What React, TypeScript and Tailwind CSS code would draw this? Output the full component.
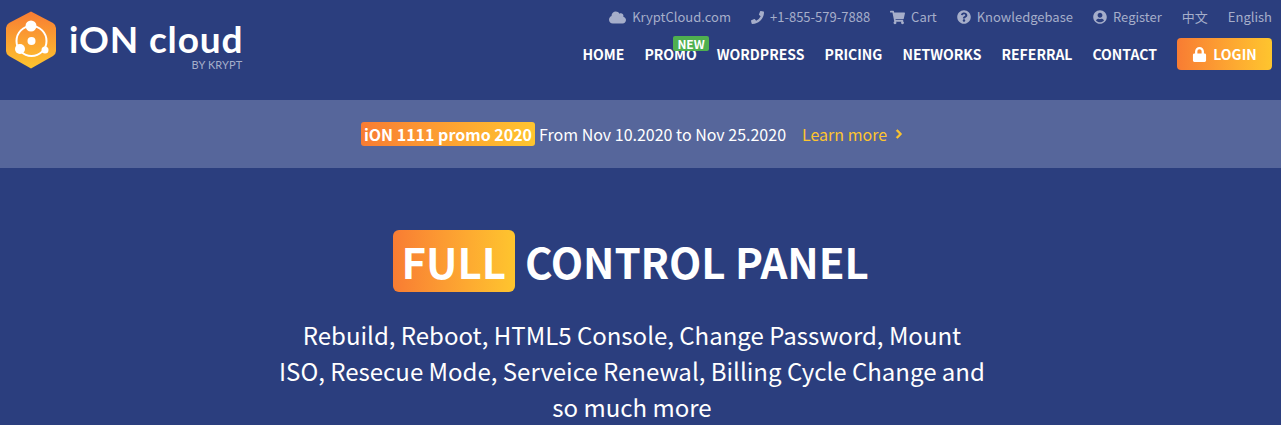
import { FaCloud, FaPhoneAlt, FaShoppingCart, FaQuestionCircle, FaUserCircle, FaLock, FaChevronRight } from 'react-icons/fa';

const topLinks = [
  { label: 'KryptCloud.com', icon: <FaCloud size={17} /> },
  { label: '+1-855-579-7888', icon: <FaPhoneAlt size={13} className="-scale-x-100" /> },
  { label: 'Cart', icon: <FaShoppingCart size={15} /> },
  { label: 'Knowledgebase', icon: <FaQuestionCircle size={14} /> },
  { label: 'Register', icon: <FaUserCircle size={14} /> },
  { label: '中文' },
  { label: 'English' },
];

const navLinks = ['HOME', 'PROMO', 'WORDPRESS', 'PRICING', 'NETWORKS', 'REFERRAL', 'CONTACT'];

function Logo() {
  return (
    <div className="flex items-start">
      <svg width="54" height="60" viewBox="0 0 54 60" className="mt-[10px]">
        <defs>
          <linearGradient id="hex" x1="0" y1="0" x2="0" y2="1">
            <stop offset="0" stopColor="#f87c33" />
            <stop offset="1" stopColor="#fec52e" />
          </linearGradient>
        </defs>
        <path d="M27 1.500 L49 13 Q52 15 52 18 L52 41 Q52 44 49 46 L27 58.500 L5 46 Q2 44 2 41 L2 18 Q2 15 5 13 Z" fill="url(#hex)" />
        <circle cx="27.500" cy="31" r="15" fill="none" stroke="#fff" strokeWidth="2" />
        <circle cx="27.500" cy="31" r="4" fill="#fff" />
        <circle cx="27" cy="16" r="5.500" fill="#fff" />
        <circle cx="16" cy="39" r="5" fill="#fff" />
        <circle cx="41" cy="40" r="3.500" fill="#fff" />
      </svg>
      <div className="ml-[11px] mt-[19px] flex flex-col items-end font-['Lato',sans-serif] text-white">
        <span className="text-[37px] font-bold leading-[40px] tracking-[0.85px]">iON cloud</span>
        <span className="mr-[1px] text-[11px] leading-[12px] tracking-[0.1px] text-[#a6aeca]">BY KRYPT</span>
      </div>
    </div>
  );
}

export default function App() {
  return (
    <div className="h-[425px] overflow-hidden bg-[#2b3e7e] font-['Noto_Sans_CJK_SC',sans-serif] text-white">
      <header className="flex h-[100px] justify-between pl-[4px] pr-[9px]">
        <Logo />
        <div className="flex flex-col items-end">
          <div className="mt-[7px] flex h-[20px] items-center gap-[20px] text-[13px] text-[#a6aeca]">
            {topLinks.map((l) => (
              <a key={l.label} className="flex items-center gap-[6px]">
                {l.icon}
                <span>{l.label}</span>
              </a>
            ))}
          </div>
          <nav className="mt-[11px] flex h-[32px] items-center gap-[20px] text-[14px] font-bold">
            {navLinks.map((n) => (
              <a key={n} className="relative">
                {n}
                {n === 'PROMO' && (
                  <span className="absolute left-[29px] -top-[8px] rounded-[2px] bg-[#4fb04f] px-[4px] text-[12px] leading-[15px]">
                    NEW
                  </span>
                )}
              </a>
            ))}
            <button className="flex h-[32px] w-[95px] items-center justify-center gap-[6px] rounded-[4px] bg-gradient-to-r from-[#f87c33] to-[#fec52e] font-bold">
              <FaLock size={15} />
              LOGIN
            </button>
          </nav>
        </div>
      </header>

      <div className="flex h-[68px] items-center justify-center bg-[#56669b] pr-[16px] text-[16px]">
        <span className="rounded-[3px] bg-gradient-to-r from-[#f87c33] to-[#fec52e] px-[3px] font-bold leading-[24px]">iON 1111 promo 2020</span>
        <span className="ml-[4px]">From Nov 10.2020 to Nov 25.2020</span>
        <a className="ml-[16px] flex items-center gap-[7px] text-[#fec52e]">
          Learn more
          <FaChevronRight size={10} stroke="currentColor" strokeWidth={40} />
        </a>
      </div>

      <section className="flex flex-col items-center pr-[17px] pt-[62px]">
        <h1 className="flex items-center pr-[2px] text-[42px] font-semibold leading-[62px]">
          <span className="rounded-[6px] bg-gradient-to-r from-[#f87c33] to-[#fec52e] pl-[8px] pr-[9px]">FULL</span>
          <span className="ml-[10px] tracking-[-0.1px]">CONTROL PANEL</span>
        </h1>
        <p className="mt-[25px] text-center text-[24px] leading-[36px]">
          Rebuild, Reboot, HTML5 Console, Change Password, Mount
          <br />
          ISO, Resecue Mode, Serveice Renewal, Billing Cycle Change and
          <br />
          so much more
        </p>
      </section>
    </div>
  );
}
